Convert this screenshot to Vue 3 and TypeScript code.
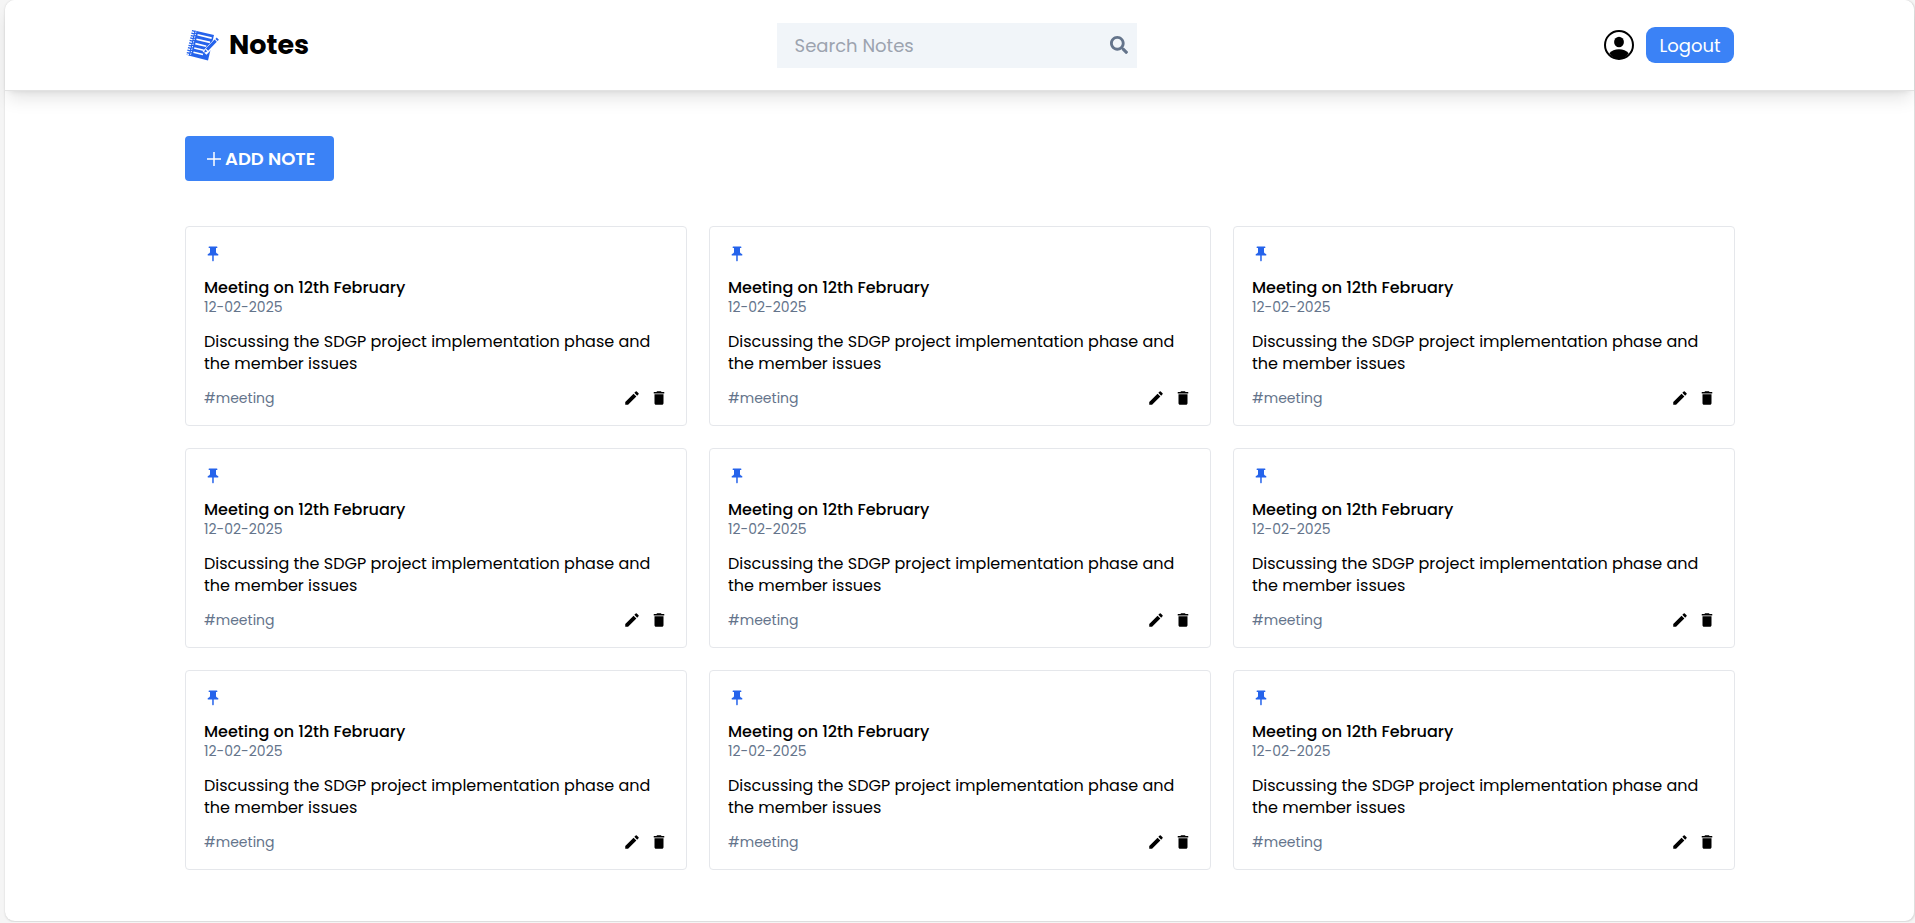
<script setup lang="ts">
import { ref } from 'vue'

interface Note {
  id: number
  title: string
  date: string
  content: string
  tag: string
}

const query = ref('')

const notes: Note[] = Array.from({ length: 9 }, (_, i) => ({
  id: i + 1,
  title: 'Meeting on 12th February',
  date: '12-02-2025',
  content: 'Discussing the SDGP project implementation phase and the member issues',
  tag: '#meeting',
}))
</script>

<template>
  <div class="frame">
    <header class="navbar">
      <div class="brand">
        <svg class="brand-icon" viewBox="0 0 32 32" aria-hidden="true">
          <path d="M7.500 1.500 27 6 21 31.500 1.500 26.500z" fill="#2563eb" />
          <path d="M6.600 1 .6 26.500" stroke="#fff" stroke-width="2" />
          <path d="M7 1.500 1.200 26.300" stroke="#2563eb" stroke-width="4" stroke-dasharray="1.300 1.200" />
          <path d="M9 2.500 3.400 26.500" stroke="#fff" stroke-width="1" stroke-dasharray="1.300 1.200" />
          <path d="m10.500 5.800 14.200 3.300M9.400 10.200l13.600 3.200M8.300 14.600l11 2.600M7.200 19l9.500 2.200M6.400 23.200l9.600 2.300" stroke="#fff" stroke-width="1.600" />
          <path d="M31 10 17.500 24" stroke="#fff" stroke-width="5.400" />
          <path d="m29.700 8.500 2.200 2.200-1.300 1.400-2.200-2.200zM27.600 10.600l2.200 2.200-8.600 8.900-2.300-2.200zM18.200 20.300l2.100 2.100-3.300 1.300z" fill="#2563eb" />
        </svg>
        <h1>Notes</h1>
      </div>
      <form class="search" role="search" @submit.prevent>
        <input v-model="query" type="text" placeholder="Search Notes" aria-label="Search Notes" />
        <button type="submit" aria-label="Search">
          <svg viewBox="0 0 512 512" aria-hidden="true">
            <path fill="currentColor" d="M505 442.700 405.300 343c-4.500-4.500-10.600-7-17-7H372c27.600-35.300 44-79.700 44-128C416 93.100 322.900 0 208 0S0 93.100 0 208s93.100 208 208 208c48.300 0 92.700-16.400 128-44v16.300c0 6.400 2.500 12.500 7 17l99.700 99.700c9.400 9.400 24.600 9.400 33.900 0l28.300-28.300c9.400-9.400 9.400-24.600.1-34zM208 336c-70.700 0-128-57.200-128-128 0-70.700 57.200-128 128-128 70.700 0 128 57.200 128 128 0 70.700-57.200 128-128 128z" />
          </svg>
        </button>
      </form>
      <div class="account">
        <svg class="avatar" viewBox="0 0 30 30" aria-hidden="true">
          <circle cx="15" cy="15" r="14" fill="none" stroke="#000" stroke-width="2" />
          <ellipse cx="15" cy="12" rx="4.900" ry="5.200" />
          <path d="M5.300 23.200c2.200-2.700 5.700-4 9.700-4s7.500 1.300 9.700 4C22.500 27 19 29 15 29s-7.500-2-9.700-5.800z" />
        </svg>
        <button class="logout" type="button">Logout</button>
      </div>
    </header>

    <main class="content">
      <button class="add" type="button">
        <svg viewBox="0 0 14 14" aria-hidden="true">
          <path d="M7 0v14M0 7h14" stroke="#fff" stroke-width="1.500" />
        </svg>
        ADD NOTE
      </button>
      <section class="grid" aria-label="Notes">
        <article v-for="note in notes" :key="note.id" class="card">
          <button class="icon pin" type="button" aria-label="Unpin note">
            <svg viewBox="0 0 24 24" aria-hidden="true">
              <path fill="currentColor" d="M16 9V4h1c.55 0 1-.45 1-1s-.45-1-1-1H7c-.55 0-1 .45-1 1s.45 1 1 1h1v5c0 1.660-1.340 3-3 3v2h5.970v7l1 1 1-1v-7H19v-2c-1.660 0-3-1.340-3-3z" />
            </svg>
          </button>
          <h2>{{ note.title }}</h2>
          <time datetime="2025-02-12">{{ note.date }}</time>
          <p>{{ note.content }}</p>
          <footer>
            <span>{{ note.tag }}</span>
            <div class="actions">
              <button class="icon" type="button" aria-label="Edit note">
                <svg viewBox="0 0 24 24" aria-hidden="true">
                  <path fill="currentColor" d="M3 17.250V21h3.750L17.810 9.940l-3.750-3.750L3 17.250zM20.710 7.040a.996.996 0 0 0 0-1.410l-2.340-2.340a.996.996 0 0 0-1.410 0l-1.830 1.830 3.750 3.750 1.830-1.830z" />
                </svg>
              </button>
              <button class="icon" type="button" aria-label="Delete note">
                <svg viewBox="0 0 24 24" aria-hidden="true">
                  <path fill="currentColor" d="M6 19c0 1.100.9 2 2 2h8c1.100 0 2-.9 2-2V7H6v12zM19 4h-3.500l-1-1h-5l-1 1H5v2h14V4z" />
                </svg>
              </button>
            </div>
          </footer>
        </article>
      </section>
    </main>
  </div>
</template>

<style>
body {
  background: #f5f5f5;
}
</style>

<style scoped>
* {
  box-sizing: border-box;
}

.frame {
  margin: 0 0 0 5px;
  min-height: calc(100vh - 1px);
  padding-bottom: 48px;
  background: #fff;
  border: 1px solid #dedede;
  border-width: 0 1px 1px 0;
  border-radius: 10px;
  box-shadow: 0 0 2px #ccc;
  font-family: Poppins, Inter, "Open Sans", sans-serif;
  color: #000;
}

button,
input {
  border: 0;
  padding: 0;
  background: none;
  color: inherit;
  font: inherit;
}

button {
  cursor: pointer;
}

svg {
  display: block;
  fill: currentColor;
}

h1,
h2,
p {
  margin: 0;
}

.navbar {
  display: flex;
  justify-content: space-between;
  align-items: center;
  height: 91px;
  padding: 0 180px 0 182px;
  background: #fff;
  border-bottom: 1px solid #e2e2e2;
  border-radius: 10px 10px 0 0;
  box-shadow: 0 11px 17px -3px rgba(0, 0, 0, 0.1), 0 4px 6px -4px rgba(0, 0, 0, 0.1);
}

.brand {
  display: flex;
  align-items: center;
  gap: 10px;
}

.brand-icon {
  width: 32px;
  height: 32px;
  overflow: visible;
  fill: none;
}

h1 {
  font-size: 27px;
  line-height: 36px;
  font-weight: 700;
}

.search {
  display: flex;
  align-items: center;
  width: 360px;
  height: 45px;
  padding: 0 9px 0 18px;
  background: #f1f5f9;
}

.search input {
  flex: 1;
  min-width: 0;
  font-size: 18px;
  outline: 0;
}

.search input::placeholder {
  color: #9ca3af;
  opacity: 1;
}

.search button {
  color: #64748b;
}

.search svg {
  width: 18px;
  height: 18px;
}

.account {
  display: flex;
  align-items: center;
  gap: 12px;
}

.avatar {
  width: 30px;
  height: 30px;
}

.logout {
  width: 88px;
  height: 36px;
  background: #3b82f6;
  border-radius: 9px;
  color: #fff;
  font-size: 18px;
}

.content {
  padding: 45px 179px 0 180px;
}

.add {
  display: flex;
  align-items: center;
  justify-content: center;
  gap: 4px;
  height: 45px;
  padding: 0 19px 0 22px;
  background: #3b82f6;
  border-radius: 4px;
  color: #fff;
  font-size: 18px;
  font-weight: 600;
}

.add svg {
  width: 14px;
  height: 14px;
}

.grid {
  display: grid;
  grid-template-columns: repeat(3, 1fr);
  gap: 22px;
  margin-top: 45px;
}

.card {
  padding: 18px 18px 17px;
  border: 1px solid #e5e7eb;
  border-radius: 4px;
}

.icon svg {
  width: 18px;
  height: 18px;
}

.pin {
  display: block;
  color: #2563eb;
}

h2 {
  margin-top: 13px;
  font-size: 16px;
  line-height: 24px;
  font-weight: 500;
}

time {
  display: block;
  color: #64748b;
  font-size: 14px;
  line-height: 14px;
}

.card p {
  margin-top: 17px;
  font-size: 16px;
  line-height: 22px;
}

footer {
  display: flex;
  align-items: center;
  justify-content: space-between;
  margin-top: 13px;
  color: #64748b;
  font-size: 14px;
  line-height: 20px;
}

.actions {
  display: flex;
  gap: 9px;
  color: #000;
}
</style>
